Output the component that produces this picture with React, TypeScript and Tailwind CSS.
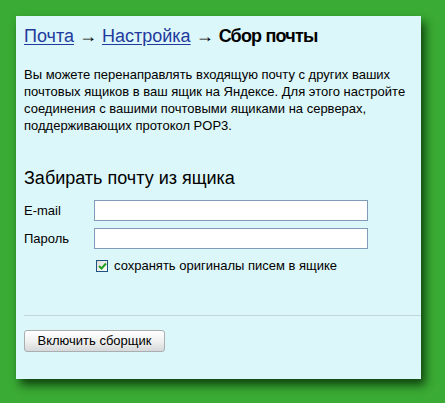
import React from "react";

// Страница сборщика почты: хлебные крошки, описание, форма и кнопка
const App = () => {
  return (
    <div className="w-[445px] h-[403px] bg-[#3aab34] pt-4 pl-4 font-['Liberation_Sans',Arial,sans-serif]">
      <div className="w-[405px] h-[363px] bg-[#dcf7f9] shadow-[4px_6px_9px_rgba(0,30,0,0.75)] pt-[10px] pl-2 flex flex-col">
        {/* Хлебные крошки */}
        <div className="text-[18px] leading-[21px] text-black">
          <a href="#" className="text-[#1f3b9e] underline underline-offset-2">Почта</a>
          <span> → </span>
          <a href="#" className="text-[#1f3b9e] underline underline-offset-2">Настройка</a>
          <span> → </span>
          <span className="font-bold tracking-[-0.8px]">Сбор почты</span>
        </div>

        {/* Описание */}
        <p className="mt-[19px] text-[13px] leading-[17px] text-black">
          Вы можете перенаправлять входящую почту с других ваших почтовых ящиков в ваш ящик на Яндексе. Для этого настройте соединения с вашими почтовыми ящиками на серверах, поддерживающих протокол POP3.
        </p>

        {/* Форма */}
        <h2 className="mt-[34px] text-[18px] leading-[21px] text-black">Забирать почту из ящика</h2>

        <div className="mt-[11px] flex flex-col gap-[7px]">
          <div className="flex items-center">
            <label className="w-[70px] text-[13px] leading-[17px] text-black">E-mail</label>
            <input type="text" className="w-[274px] h-[21px] bg-white border border-[#7f9db9] outline-none" />
          </div>
          <div className="flex items-center">
            <label className="w-[70px] text-[13px] leading-[17px] text-black">Пароль</label>
            <input type="password" className="w-[274px] h-[21px] bg-white border border-[#7f9db9] outline-none" />
          </div>
        </div>

        <div className="mt-[8px] ml-[72px] flex items-center gap-[6px]">
          <span className="w-[12px] h-[12px] border border-[#1c5180] bg-gradient-to-br from-[#dcdcd7] to-white flex items-center justify-center">
            <svg width="9" height="8" viewBox="0 0 9 8">
              <path d="M1 4 L3.5 6.5 L8 1.5" fill="none" stroke="#21a121" strokeWidth="2" />
            </svg>
          </span>
          <span className="text-[13px] leading-[17px] text-black">сохранять оригиналы писем в ящике</span>
        </div>

        {/* Разделитель */}
        <div className="mt-[41px] h-px bg-[#c3d8dc]" />

        <div className="mt-[12px]">
          <button className="w-[141px] h-[22px] rounded-[3px] border border-[#a9aeb1] bg-gradient-to-b from-white via-[#f1f1f1] to-[#d6d8d9] text-[13px] leading-[17px] text-black">
            Включить сборщик
          </button>
        </div>
      </div>
    </div>
  );
};

export default App;
